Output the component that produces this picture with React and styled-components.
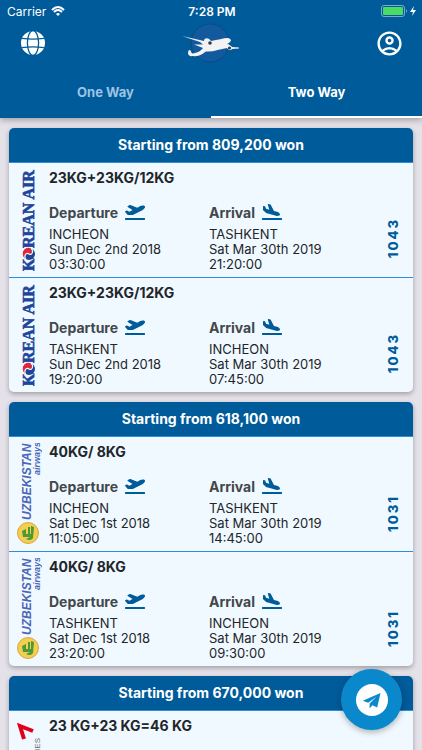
import React from "react";
import styled, { createGlobalStyle } from "styled-components";
import { MdOutlineAccountCircle } from "react-icons/md";
import { FaPlaneArrival, FaPlaneDeparture } from "react-icons/fa";

const tickets = [
    {
        price: "809,200",
        airline: "korean",
        flights: [
            {
                baggage: "23KG+23KG/12KG",
                number: "1043",
                from: { city: "INCHEON", date: "Sun Dec 2nd 2018", time: "03:30:00" },
                to: { city: "TASHKENT", date: "Sat Mar 30th 2019", time: "21:20:00" },
            },
            {
                baggage: "23KG+23KG/12KG",
                number: "1043",
                from: { city: "TASHKENT", date: "Sun Dec 2nd 2018", time: "19:20:00" },
                to: { city: "INCHEON", date: "Sat Mar 30th 2019", time: "07:45:00" },
            },
        ],
    },
    {
        price: "618,100",
        airline: "uzbekistan",
        flights: [
            {
                baggage: "40KG/ 8KG",
                number: "1031",
                from: { city: "INCHEON", date: "Sat Dec 1st 2018", time: "11:05:00" },
                to: { city: "TASHKENT", date: "Sat Mar 30th 2019", time: "14:45:00" },
            },
            {
                baggage: "40KG/ 8KG",
                number: "1031",
                from: { city: "TASHKENT", date: "Sat Dec 1st 2018", time: "23:20:00" },
                to: { city: "INCHEON", date: "Sat Mar 30th 2019", time: "09:30:00" },
            },
        ],
    },
    {
        price: "670,000",
        airline: "asiana",
        flights: [{ baggage: "23 KG+23 KG=46 KG" }],
    },
];

function GlobeIcon() {
    return (
        <svg width="24" height="24" viewBox="0 0 24 24">
            <circle cx="12" cy="12" r="12" fill="#fff" />
            <g fill="none" stroke="#005b9a" strokeWidth="1.3">
                <ellipse cx="12" cy="12" rx="5.6" ry="12.4" />
                <path d="M1 7.4 Q12 9 23 7.4 M1 16.6 Q12 15 23 16.6" />
            </g>
        </svg>
    );
}

function TelegramIcon() {
    return (
        <svg width="32" height="32" viewBox="0 0 32 32">
            <circle cx="16" cy="16" r="16" fill="#fff" />
            <path d="M24.5 9 L6.8 16.8 L12.2 18.8 L20.5 12.8 L13.6 19.6 L13.6 24.4 L16.4 21.2 L21.2 23.4 Z" fill="#0a88cc" />
        </svg>
    );
}

function PlaneLogo() {
    return (
        <svg width="60" height="42" viewBox="0 0 60 42" role="img" aria-label="Airplane">
            <circle cx="29" cy="21" r="19" fill="#125a9d" stroke="#0a4a80" />
            <path
                d="M1 14 L23 19 C23 16 27 15 30 19 C37 18 42 16 47 16 C51 17 51 20 46 22 C48 22 50 24 51 25 L58 25.5 L58 26.5 L51 27 C50 29 47 28 46 26 C39 27 33 30 25 29.5 C21 32 18 35 12 34 C7 35 6 31 8 28 C11 28 9 31 12 31.5 C16 31 20 29 22 26 L13 22.5 L22 22.5 L19 20 Z"
                fill="#f3f3f3"
            />
            <circle cx="29" cy="21" r="1.8" fill="#263f56" />
            <circle cx="48.5" cy="26" r="1.6" fill="#263f56" />
        </svg>
    );
}

function AirlineLogo({ airline }) {
    if (airline === "korean") {
        return (
            <Logo width="28" height="104" viewBox="0 0 28 104" role="img" aria-label="Korean Air">
                <g
                    transform="translate(20 102) rotate(-90)"
                    fill="#1d459b"
                    stroke="#1d459b"
                    strokeWidth="0.6"
                    fontFamily="Liberation Serif"
                    fontWeight="700"
                    fontSize="16"
                >
                    <text x="0" y="0">K</text>
                    <text x="23" y="0">REAN AIR</text>
                </g>
                <circle cx="15" cy="85" r="6" fill="#1d459b" />
                <path d="M11 80 A6 6 0 0 0 12 90 C10 86 13 84 15 85 C18 86 19 82 16 79 A6 6 0 0 0 11 80Z" fill="#e32636" />
                <path d="M12 91 C9 86 13 83 15 85 C18 87 20 82 17 79" fill="none" stroke="#f0f9ff" strokeWidth="1.2" />
            </Logo>
        );
    }
    if (airline === "uzbekistan") {
        return (
            <Logo width="28" height="104" viewBox="0 0 28 104" role="img" aria-label="Uzbekistan airways">
                <g transform="rotate(-90)" fill="#4b67b8" fontFamily="Liberation Sans" fontStyle="italic" fontWeight="700">
                    <text x="-77" y="17" fontSize="12">UZBEKISTAN</text>
                    <text x="-32" y="26" fontSize="9">airways</text>
                </g>
                <circle cx="14" cy="90" r="10.5" fill="#f2cf4e" stroke="#dba646" />
                <path
                    d="M8 88 L12 86 L12 91 L14 91 L14 84 L16 84 L16 91 L17 91 L17 83 L20 84 L19 95 C17 98 14 97 12 96 L16 94 L9 94 Z"
                    fill="#4d9837"
                />
            </Logo>
        );
    }
    return (
        <Logo width="28" height="104" viewBox="0 0 28 104" role="img" aria-label="Asiana Airlines">
            <path d="M10 22 L6 9 L19 14" fill="none" stroke="#e0001b" strokeWidth="4" />
            <text
                transform="translate(26 21) rotate(-90)"
                textAnchor="end"
                fill="#686a70"
                fontFamily="Liberation Sans"
                fontSize="8"
            >
                AIRLINES
            </text>
        </Logo>
    );
}

function Stop({ title, icon, stop }) {
    return (
        <div>
            <StopTitle>
                {title}
                {icon}
            </StopTitle>
            <StopText>{stop.city}</StopText>
            <StopText>{stop.date}</StopText>
            <StopText>{stop.time}</StopText>
        </div>
    );
}

function Flight({ airline, flight }) {
    return (
        <FlightRow>
            <AirlineLogo airline={airline} />
            <Details>
                <Baggage>{flight.baggage}</Baggage>
                {flight.from && (
                    <Stops>
                        <Stop title="Departure" icon={<FaPlaneDeparture />} stop={flight.from} />
                        <Stop title="Arrival" icon={<FaPlaneArrival />} stop={flight.to} />
                    </Stops>
                )}
            </Details>
            {flight.number && <FlightNumber>{flight.number}</FlightNumber>}
        </FlightRow>
    );
}

function App() {
    return (
        <Screen>
            <GlobalStyle />
            <Header>
                <StatusBar>
                    <Carrier>
                        Carrier
                        <svg width="14" height="11" viewBox="0 0 14 11" fill="none" stroke="#fff" strokeWidth="2">
                            <path d="M1 4 Q7 -2 13 4 M3 6 Q7 2 11 6" />
                            <path d="M5 8 Q7 6 9 8 L7 10Z" fill="#fff" stroke="none" />
                        </svg>
                    </Carrier>
                    <Clock>7:28 PM</Clock>
                    <Battery>
                        <svg width="36" height="12" viewBox="0 0 36 12">
                            <rect x="0.5" y="0.5" width="23" height="11" rx="2.5" fill="none" stroke="#7fa9cb" />
                            <rect x="2" y="2" width="20" height="8" rx="1" fill="#4cd964" />
                            <path d="M25 4 Q27 6 25 8Z" fill="#7fa9cb" />
                            <path d="M33 1 L29 7 H32 L31 11 L35 5 H32Z" fill="#fff" />
                        </svg>
                    </Battery>
                </StatusBar>
                <Toolbar>
                    <IconButton aria-label="Language"><GlobeIcon /></IconButton>
                    <PlaneLogo />
                    <IconButton aria-label="Account"><MdOutlineAccountCircle /></IconButton>
                </Toolbar>
                <Tabs>
                    <Tab>One Way</Tab>
                    <Tab $active>Two Way</Tab>
                </Tabs>
            </Header>
            <TicketList>
                {tickets.map((ticket) => (
                    <Card key={ticket.price}>
                        <CardTitle>Starting from {ticket.price} won</CardTitle>
                        {ticket.flights.map((flight, index) => (
                            <Flight key={index} airline={ticket.airline} flight={flight} />
                        ))}
                    </Card>
                ))}
            </TicketList>
            <TelegramButton aria-label="Telegram"><TelegramIcon /></TelegramButton>
        </Screen>
    );
}

export default App;

const GlobalStyle = createGlobalStyle`
    * {
        box-sizing: border-box;
    }

    body {
        margin: 0;
        background: #e4e1e8;
        font-family: Inter, "Liberation Sans", sans-serif;
        color: #222529;
    }

    button {
        border: none;
        padding: 0;
        background: none;
        font-family: inherit;
        cursor: pointer;
    }
`;

const Screen = styled.div`
    display: flex;
    flex-direction: column;
    height: 100vh;
`;

const Header = styled.header`
    position: relative;
    flex: none;
    background: #005b9a;
    color: #ffffff;
    box-shadow: 0 2px 6px rgba(0, 0, 0, 0.3);
`;

const StatusBar = styled.div`
    display: grid;
    grid-template-columns: 1fr auto 1fr;
    align-items: center;
    height: 22px;
    padding: 0 5px 0 7px;
    font-size: 12px;
`;

const Carrier = styled.span`
    display: flex;
    align-items: center;
    gap: 5px;
`;

const Clock = styled.span`
    font-weight: 600;
`;

const Battery = styled.span`
    display: flex;
    justify-content: flex-end;
`;

const Toolbar = styled.div`
    display: flex;
    align-items: center;
    justify-content: space-between;
    height: 42px;
    padding: 0 18px;
`;

const IconButton = styled.button`
    display: flex;
    justify-content: center;
    width: 29px;
    color: #ffffff;
    font-size: 29px;
`;

const Tabs = styled.nav`
    display: flex;
    height: 54px;
`;

const Tab = styled.button`
    flex: 1;
    border-top: 4px solid transparent;
    border-bottom: 2px solid ${(props) => (props.$active ? "#ffffff" : "transparent")};
    color: ${(props) => (props.$active ? "#ffffff" : "#9cc4e5")};
    font-size: 13px;
    font-weight: 700;
`;

const TicketList = styled.main`
    display: flex;
    flex: 1;
    flex-direction: column;
    gap: 10px;
    min-height: 0;
    padding: 10px 9px;
    overflow-y: auto;
    scrollbar-width: none;
`;

const Card = styled.section`
    flex: none;
    border-radius: 5px;
    overflow: hidden;
    background: #f0f9ff;
    box-shadow: 0 2px 5px rgba(0, 0, 0, 0.3);
`;

const CardTitle = styled.h2`
    margin: 0;
    background: #005b9a;
    color: #ffffff;
    font-size: 14px;
    font-weight: 700;
    line-height: 34px;
    text-align: center;
`;

const FlightRow = styled.article`
    display: flex;
    height: 115px;
    padding: 6px 12px 4px 5px;
    border-top: 1px solid #2f8ddb;
`;

const Logo = styled.svg`
    flex: none;
`;

const Details = styled.div`
    flex: 1;
    padding-left: 7px;
`;

const Baggage = styled.h3`
    margin: 0;
    font-size: 14px;
    font-weight: 700;
    line-height: 18px;
`;

const Stops = styled.div`
    display: grid;
    grid-template-columns: minmax(auto, 160px) 1fr;
    margin-top: 14px;
`;

const StopTitle = styled.h4`
    display: flex;
    align-items: center;
    gap: 7px;
    margin: 0 0 4px;
    height: 22px;
    color: #43474b;
    font-size: 14px;
    font-weight: 700;

    svg {
        color: #005b9a;
        font-size: 20px;
    }
`;

const StopText = styled.p`
    margin: 0;
    font-size: 13px;
    line-height: 15px;
`;

const FlightNumber = styled.span`
    align-self: flex-end;
    writing-mode: vertical-rl;
    transform: rotate(180deg);
    color: #005b9a;
    font-size: 13px;
    font-weight: 800;
    letter-spacing: 2px;
    padding-top: 15px;
`;

const TelegramButton = styled.button`
    position: fixed;
    right: 20px;
    bottom: 20px;
    display: flex;
    align-items: center;
    justify-content: center;
    width: 61px;
    height: 61px;
    border-radius: 50%;
    && {
        background: #0a88cc;
    }
    box-shadow: 0 2px 6px rgba(0, 0, 0, 0.3);
`;
